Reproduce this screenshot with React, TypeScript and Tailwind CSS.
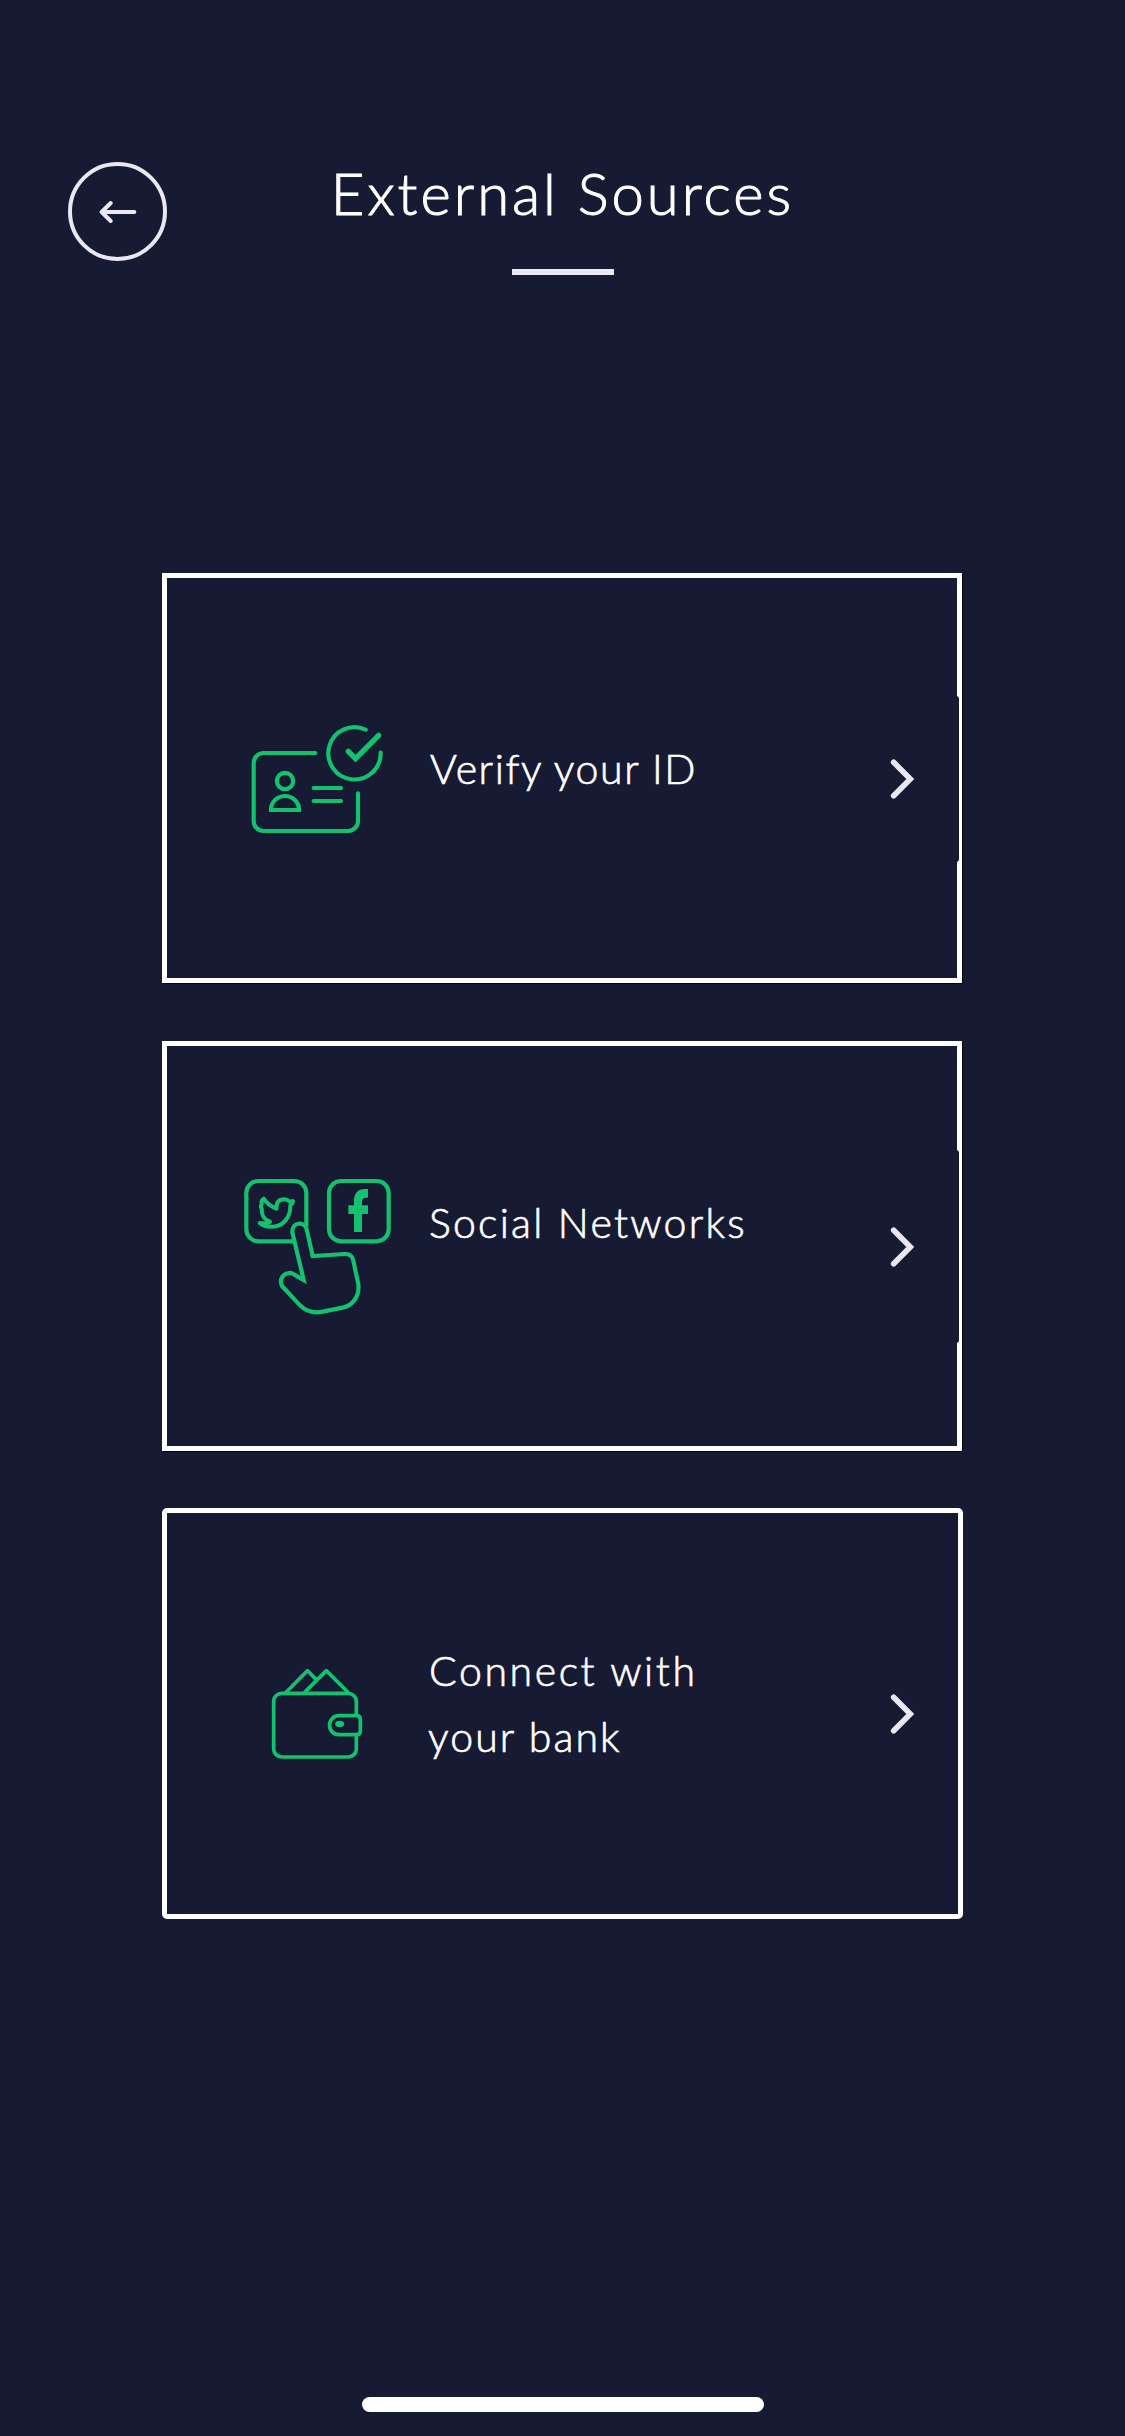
import React from "react";

const GREEN = "#12c26f";

function IdIcon() {
  return (
    <svg className="ml-[68px] mt-[132px] h-[140px] w-[160px]" viewBox="0 0 480 420" fill="none" stroke={GREEN} strokeWidth="12.500" strokeLinecap="round">
      <path d="M241 129H86a30 30 0 0 0-30 30v174a30 30 0 0 0 30 30h253a30 30 0 0 0 30-30V250" />
      <circle cx="150" cy="213" r="24.500" />
      <path d="M108 300v-1a42 41 0 0 1 84 0v1z" strokeLinecap="butt" />
      <path d="M236 234h82M236 273h82" />
      <path d="M392 59A78.500 78.500 0 1 0 437 128" />
      <path d="M340 124l21.500 22L431 76" strokeWidth="16" />
    </svg>
  );
}

function SocialIcon() {
  return (
    <svg className="ml-[68px] mt-[119px] h-[160px] w-[170px]" viewBox="0 0 510 480" fill="none" stroke={GREEN} strokeWidth="12.500" strokeLinecap="butt">
      <path d="M174 229H70a36 36 0 0 1-36-36V84a36 36 0 0 1 36-36h108a36 36 0 0 1 36 36v101" />
      <rect x="282" y="48" width="179" height="181" rx="36" />
      <path d="M357 201v-54h-17v-26h17v-14c0-24 14-35 33-35h9v26h-6c-9 0-12 5-12 12v11h18v26h-18v54z" fill={GREEN} stroke="none" />
      <path
        d="M86 101c7 11 21 23 38 30 0-22 10-28 23-28 8 0 13 3 17 7l10-2c1 5-4 10-8 13 1 35-21 64-54 64-15 0-31-4-38-11 11 2 22 1 31-4-15-6-23-18-24-28l-1-11c-3-5-3-9 0-13-2-8-1-13 6-17z"
        strokeWidth="12"
        strokeLinejoin="round"
      />
      <path d="M206 345L172 202c-2-31 36-35 43-9l18 80 97-6c14-1 22 6 25 20l15 71c4 34-16 64-47 70l-60 12c-29 6-52-3-68-19l-54-58c-12-26 15-50 37-34z" />
    </svg>
  );
}

function WalletIcon() {
  return (
    <svg className="ml-[88px] mt-[137px] h-[130px] w-[130px]" viewBox="0 0 390 390" fill="none" stroke={GREEN} strokeWidth="11" strokeLinejoin="round">
      <path d="M304 196v-42a24 24 0 0 0-24-24H80a24 24 0 0 0-24 24v143a24 24 0 0 0 24 24h200a24 24 0 0 0 24-24v-42" />
      <path d="M92 128l65-66 27 27M148 128l66-66 67 67" />
      <path d="M252 197h53q11 0 11 11v35q0 11-11 11h-53a28.500 28.500 0 0 1 0-57z" />
      <ellipse cx="254" cy="222" rx="13.500" ry="9.500" fill={GREEN} stroke="none" />
    </svg>
  );
}

function Chevron() {
  return (
    <svg className="h-[40px] w-[24px]" viewBox="0 0 72 120" fill="none" stroke="#e9e7f1" strokeWidth="17" strokeLinecap="round">
      <path d="M11 10l50 50-50 50" />
    </svg>
  );
}

type CardProps = {
  className: string;
  icon: React.ReactNode;
  labelClass: string;
  label: React.ReactNode;
  notchClass?: string;
};

function SourceCard({ className, icon, labelClass, label, notchClass }: CardProps) {
  return (
    <button className={`relative flex items-start border-[5px] border-white text-left ${className}`}>
      <span className="w-[262px] shrink-0">{icon}</span>
      <span className={`w-[461px] shrink-0 whitespace-nowrap text-[41px] leading-[66px] [-webkit-text-stroke:0.7px_white] ${labelClass}`}>{label}</span>
      <span className="mt-[181px]">
        <Chevron />
      </span>
      {notchClass && <span className={`absolute right-[-2px] w-[8px] rounded-r-[3px] bg-[#171a33] ${notchClass}`} />}
    </button>
  );
}

export default function App() {
  return (
    <main className="flex h-[2436px] w-[1125px] flex-col bg-[#171a33] font-['Lato',sans-serif] font-light text-white">
      <header className="grid h-[573px] shrink-0 grid-cols-[168px_789px_168px] items-start">
        <button aria-label="Back" className="ml-[68px] mt-[162px] flex size-[99px] items-center justify-center rounded-full border-4 border-[#e9e7f1]">
          <svg className="h-[24px] w-[38px]" viewBox="0 0 114 72" fill="none" stroke="#e9e7f1" strokeWidth="12" strokeLinecap="round" strokeLinejoin="round">
            <path d="M106 36H8M35 9L8 36l27 27" />
          </svg>
        </button>
        <div className="flex flex-col items-center pt-[158px]">
          <h1 className="whitespace-nowrap text-[58px] leading-[70px] tracking-[3px] [-webkit-text-stroke:1px_white]">External Sources</h1>
          <div className="mt-[41px] h-[6px] w-[102px] bg-[#e9e7f1]" />
        </div>
      </header>
      <section className="ml-[162px] flex flex-col items-start">
        <SourceCard
          className="h-[410px] w-[800px] shadow-[1px_1px_0_#05060c]"
          icon={<IdIcon />}
          labelClass="mt-[158px] pl-px tracking-[1.6px]"
          label="Verify your ID"
          notchClass="top-[118px] h-[166px]"
        />
        <SourceCard
          className="mt-[58px] h-[410px] w-[800px] shadow-[1px_1px_0_#05060c]"
          icon={<SocialIcon />}
          labelClass="mt-[144px] tracking-[2.25px]"
          label="Social Networks"
          notchClass="top-[104px] h-[193px]"
        />
        <SourceCard
          className="mt-[57px] h-[411px] w-[801px] rounded-[5px]"
          icon={<WalletIcon />}
          labelClass="mt-[125px]"
          label={
            <>
              <span className="block tracking-[2.6px]">Connect with</span>
              <span className="-ml-px block tracking-[2.1px]">your bank</span>
            </>
          }
        />
      </section>
      <div className="mx-auto mb-[24px] mt-auto h-[15px] w-[402px] rounded-full bg-white" />
    </main>
  );
}
